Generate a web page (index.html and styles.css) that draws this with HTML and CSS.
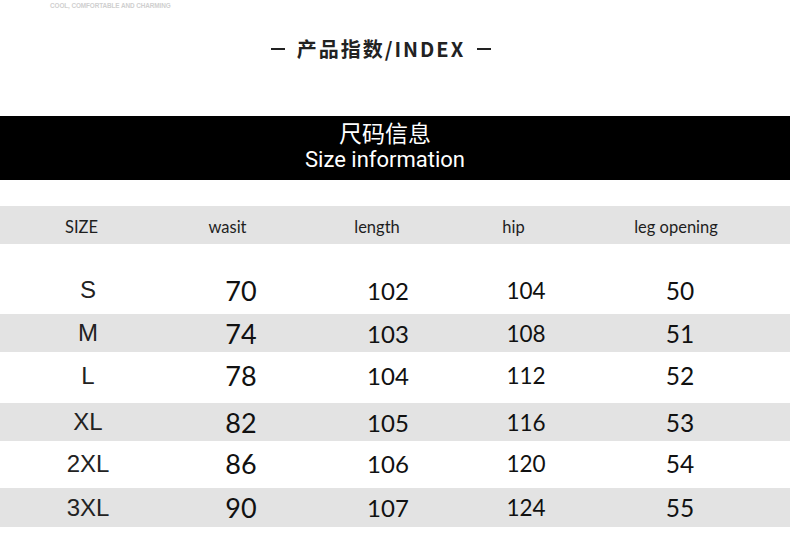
FILE: index.html
```html
<!DOCTYPE html>
<html lang="zh">
<head>
<meta charset="utf-8">
<title>产品指数</title>
<link rel="stylesheet" href="styles.css">
</head>
<body>
<div class="page">
  <div class="tagline">COOL, COMFORTABLE AND CHARMING</div>
  <div class="title">
    <span class="dash"></span>
    <h1 class="title-text">产品指数/INDEX</h1>
    <span class="dash"></span>
  </div>
  <div class="banner">
    <div class="banner-cn">尺码信息</div>
    <div class="banner-en">Size information</div>
  </div>
  <div class="thead">
    <div>SIZE</div>
    <div>wasit</div>
    <div>length</div>
    <div>hip</div>
    <div>leg opening</div>
  </div>
  <div class="tbody">
    <div class="row r-s"><div class="c1">S</div><div class="c2">70</div><div class="c3">102</div><div class="c4">104</div><div class="c5">50</div></div>
    <div class="row r-m gray"><div class="c1">M</div><div class="c2">74</div><div class="c3">103</div><div class="c4">108</div><div class="c5">51</div></div>
    <div class="row r-l"><div class="c1">L</div><div class="c2">78</div><div class="c3">104</div><div class="c4">112</div><div class="c5">52</div></div>
    <div class="row r-xl gray"><div class="c1">XL</div><div class="c2">82</div><div class="c3">105</div><div class="c4">116</div><div class="c5">53</div></div>
    <div class="row r-2xl"><div class="c1">2XL</div><div class="c2">86</div><div class="c3">106</div><div class="c4">120</div><div class="c5">54</div></div>
    <div class="row r-3xl gray"><div class="c1">3XL</div><div class="c2">90</div><div class="c3">107</div><div class="c4">124</div><div class="c5">55</div></div>
  </div>
</div>
</body>
</html>
```
FILE: styles.css
```css
* { box-sizing: border-box; }
html, body { margin: 0; padding: 0; background: #fff; }
body { width: 790px; height: 558px; overflow: hidden; font-family: "Liberation Sans", Arial, sans-serif; color: #222; }

.tagline {
  height: 12px;
  padding-left: 50px;
  font-size: 6.4px;
  line-height: 12px;
  color: #cfcfcf;
  font-weight: bold;
  letter-spacing: -0.1px;
  white-space: nowrap;
}

.title {
  height: 74px;
  display: flex;
  align-items: center;
  justify-content: center;
  gap: 12px;
  padding-right: 28px;
}
.title-text {
  margin: 0;
  font-family: "Noto Sans CJK SC", "Noto Sans", sans-serif;
  font-size: 20px;
  font-weight: bold;
  letter-spacing: 2px;
  color: #222;
  line-height: 24px;
}
.dash {
  display: block;
  width: 14px;
  height: 2px;
  background: #222;
}

.banner {
  margin-top: 30px;
  height: 64px;
  background: #000;
  color: #fff;
  display: flex;
  flex-direction: column;
  align-items: center;
  padding-top: 3px;
  padding-right: 20px;
}
.banner-cn {
  font-family: "Noto Sans CJK SC", sans-serif;
  font-size: 23px;
  line-height: 26px;
  font-weight: 400;
}
.banner-en {
  font-family: Roboto, "Liberation Sans", sans-serif;
  font-size: 22px;
  line-height: 30px;
}

.thead {
  margin-top: 26px;
  height: 38px;
  padding-top: 4px;
  background: #e3e3e3;
  display: grid;
  grid-template-columns: 163px 129px 170px 103px 222px;
  align-items: center;
  justify-items: center;
  font-family: Lato, "Open Sans", sans-serif;
  font-size: 16.5px;
  color: #1e1e1e;
}

.tbody { margin-top: 27px; }
.row {
  display: grid;
  grid-template-columns: 176px 130px 164px 112px 196px;
  align-items: center;
  justify-items: center;
  height: 43px;
}
.gray { background: #e3e3e3; }
.r-s { padding-bottom: 5px; }
.r-m { height: 38px; }
.r-l { height: 51px; padding-bottom: 4px; }
.r-xl { height: 38px; }
.r-2xl { height: 47px; padding-bottom: 2px; }
.r-3xl { height: 39px; }

.c1 { font-family: "Liberation Sans", Arial, sans-serif; font-size: 24px; color: #222; }
.c2 { font-family: Lato, sans-serif; font-size: 27px; color: #111; }
.c3 { font-family: Lato, sans-serif; font-size: 24px; color: #111; }
.c4 { font-family: Lato, sans-serif; font-size: 22.5px; color: #111; }
.c5 { font-family: Lato, sans-serif; font-size: 24.5px; color: #111; }
```
